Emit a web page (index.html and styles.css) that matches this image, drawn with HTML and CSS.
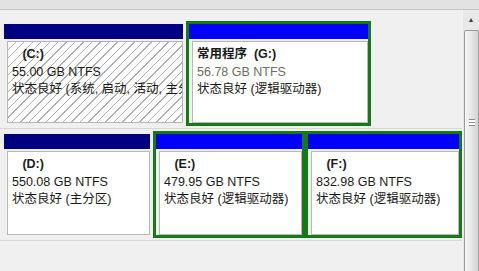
FILE: index.html
```html
<!DOCTYPE html>
<html>
<head>
<meta charset="UTF-8">
<title>磁盘管理</title>
<link rel="stylesheet" href="styles.css">
</head>
<body>
	<div class="topstrip"></div>

	<div id="view">
		<div class="disks">

			<!-- 磁盘 0 -->
			<div class="disk disk1">
				<div class="part primary part-c">
					<div class="bar"></div>
					<div class="info hatched">
						<div class="name">&nbsp;&nbsp;&nbsp;(C:)</div>
						<div>55.00 GB NTFS</div>
						<div>状态良好 (系统, 启动, 活动, 主分区)</div>
					</div>
				</div>
				<div class="part logical selected part-g">
					<div class="bar"></div>
					<div class="info">
						<div class="name">常用程序&nbsp;&nbsp;(G:)</div>
						<div class="faded">56.78 GB NTFS</div>
						<div>状态良好 (逻辑驱动器)</div>
					</div>
				</div>
			</div>

			<!-- 磁盘 1 -->
			<div class="disk disk2">
				<div class="part primary part-d">
					<div class="bar"></div>
					<div class="info">
						<div class="name">&nbsp;&nbsp;&nbsp;(D:)</div>
						<div>550.08 GB NTFS</div>
						<div>状态良好 (主分区)</div>
					</div>
				</div>
				<div class="part logical selected part-e">
					<div class="bar"></div>
					<div class="info">
						<div class="name">&nbsp;&nbsp;&nbsp;(E:)</div>
						<div>479.95 GB NTFS</div>
						<div>状态良好 (逻辑驱动器)</div>
					</div>
				</div>
				<div class="part logical selected part-f">
					<div class="bar"></div>
					<div class="info">
						<div class="name">&nbsp;&nbsp;&nbsp;(F:)</div>
						<div>832.98 GB NTFS</div>
						<div>状态良好 (逻辑驱动器)</div>
					</div>
				</div>
			</div>

		</div>

		<div class="scrollbar">
			<div class="sb-up">&#9650;</div>
			<div class="sb-thumb">
				<span class="grip"></span>
			</div>
		</div>
	</div>
</body>
</html>
```

FILE: styles.css
```css
	body {
		margin: 0;
		padding: 0;
		width: 479px;
		height: 271px;
		overflow: hidden;
		background-color: #f0f0f0;
		font-family: "Liberation Sans", "Noto Sans CJK SC", sans-serif;
		font-size: 12.5px;
		color: #1a1a1a;
	}

	.topstrip {
		height: 9px;
		background-color: #e2e2e2;
		border-bottom: solid 1px #c4c4c4;
	}

	#view {
		display: flex;
		height: 261px;
	}

	.disks {
		flex: 1;
	}

	.disk {
		display: flex;
		padding: 0 0 2px 1px;
		border-bottom: solid 1px #d6d6d6;
	}

	.disk1 {
		padding-top: 11px;
	}

	.disk2 {
		padding-top: 2px;
	}

	.disk1 .part { height: 105px; }
	.disk2 .part { height: 107px; }

	/* 파티션 */
	.part {
		box-sizing: border-box;
		display: flex;
		flex-direction: column;
		border: solid 3px transparent;
	}

	.part.selected {
		border-color: #157a15;
	}

	.part-c { width: 185px; }
	.part-g { width: 185px; }
	.part-d { width: 152px; }
	.part-e { width: 152px; }
	.part-f { width: 157px; }

	.bar {
		height: 15px;
	}

	.primary .bar {
		background-color: #000080;
	}

	.logical .bar {
		background-color: #0000f8;
	}

	.info {
		flex: 1;
		margin: 2px 0 0 3px;
		padding: 4px 0 0 4px;
		background-color: #fff;
		border: solid 1px #b8b8b8;
		line-height: 17.5px;
		white-space: nowrap;
		overflow: hidden;
	}

	.info.hatched {
		background: repeating-linear-gradient(135deg, #fff 0 5px, #b0b0b0 5px 6px);
	}

	.name {
		font-weight: bold;
	}

	.faded {
		color: #6c6e5e;
	}

	/* 스크롤바 */
	.scrollbar {
		width: 16px;
		display: flex;
		flex-direction: column;
		background-color: #e8e8e8;
		border-left: solid 1px #f4f4f4;
	}

	.sb-up {
		height: 19px;
		font-size: 7px;
		line-height: 19px;
		text-align: center;
		color: #404040;
	}

	.sb-thumb {
		flex: 1;
		margin: 1px 0 -10px 1px;
		border: solid 1px #9a9a9a;
		border-radius: 2px;
		background: linear-gradient(to right, #f6f6f6, #e2e2e2 60%, #d4d4d4);
		position: relative;
	}

	.grip {
		position: absolute;
		left: 4px;
		top: 88px;
		width: 6px;
		height: 5px;
		border-top: solid 1px #8a8a8a;
		border-bottom: solid 1px #8a8a8a;
		background: linear-gradient(#fff 0 2px, #8a8a8a 2px 3px, #fff 3px);
	}
```
